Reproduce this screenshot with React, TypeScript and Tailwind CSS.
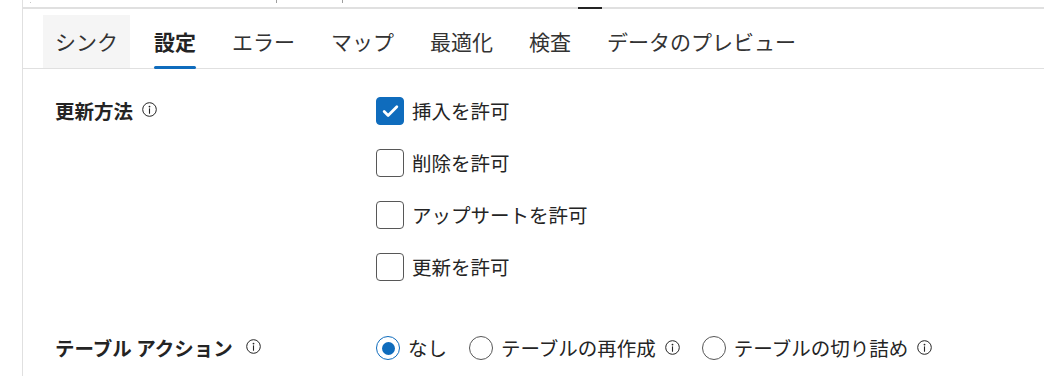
import { Check } from 'lucide-react';

const tabs = ['シンク', '設定', 'エラー', 'マップ', '最適化', '検査', 'データのプレビュー'];

const checks = [
  { label: '挿入を許可', checked: true },
  { label: '削除を許可', checked: false },
  { label: 'アップサートを許可', checked: false },
  { label: '更新を許可', checked: false },
];

const radios = [
  { label: 'なし', checked: true, info: false },
  { label: 'テーブルの再作成', checked: false, info: true },
  { label: 'テーブルの切り詰め', checked: false, info: true },
];

const InfoIcon = ({ className = '' }: { className?: string }) => (
  <svg width="15" height="15" viewBox="0 0 15 15" className={className}>
    <circle cx="7.5" cy="7.5" r="6.8" fill="none" stroke="#242424" strokeWidth="1" />
    <circle cx="7.5" cy="4.6" r="0.9" fill="#242424" />
    <path d="M7.5 6.8v4.4" stroke="#242424" strokeWidth="1.1" strokeLinecap="round" />
  </svg>
);

const App = () => {
  return (
    <div className="flex h-[376px] w-[1044px] overflow-hidden bg-white text-[#242424] font-['Noto_Sans_CJK_JP','Noto_Sans',sans-serif]">
      <div className="w-[22px] shrink-0" />
      <div className="flex flex-1 flex-col border-l border-[#e0e0e0]">
        {/* splitter remnants */}
        <div className="relative h-[7px]">
          <div className="absolute left-[7px] top-[2px] h-px w-px bg-[#c8c8c8]" />
          <div className="absolute left-[253px] top-0 h-[3px] w-px bg-[#9e9e9e]" />
          <div className="absolute left-[319px] top-0 h-[3px] w-px bg-[#9e9e9e]" />
        </div>
        <div className="flex h-[2px]">
          <div className="w-[555px] bg-[#e0e0e0]" />
          <div className="w-[24px] bg-[#242424]" />
          <div className="flex-1 bg-[#e0e0e0]" />
        </div>

        {/* tabs */}
        <div className="mt-[6px] flex gap-3 border-b border-[#e0e0e0] pl-[20px]">
          {tabs.map((t, i) => (
            <div
              key={t}
              className={`relative flex h-[53px] items-center px-3 text-[21px] leading-none ${
                i === 0 ? 'bg-[#f5f5f5]' : ''
              } ${i === 1 ? 'font-bold' : 'text-[#333333]'}`}
            >
              {t}
              {i === 1 && <div className="absolute bottom-[-1px] left-3 right-3 h-[3px] rounded-sm bg-[#0f6cbd]" />}
            </div>
          ))}
        </div>

        {/* settings */}
        <div className="pl-[32px] pt-[28px] text-[19.5px] leading-none">
          <div className="flex">
            <div className="flex h-[28px] w-[321px] items-center gap-[9px]">
              <span className="font-bold">更新方法</span>
              <InfoIcon className="-mt-[4px]" />
            </div>
            <div className="flex flex-col gap-[24px]">
              {checks.map((c) => (
                <div key={c.label} className="flex h-[28px] items-center gap-2">
                  <div
                    className={`flex h-[28px] w-[28px] items-center justify-center rounded-[4px] border ${
                      c.checked ? 'border-[#0f6cbd] bg-[#0f6cbd]' : 'border-[#575757] bg-white'
                    }`}
                  >
                    {c.checked && <Check className="h-[19px] w-[19px] text-white" strokeWidth={3.5} />}
                  </div>
                  <span>{c.label}</span>
                </div>
              ))}
            </div>
          </div>

          <div className="mt-[55px] flex h-[24px] items-center">
            <div className="flex w-[321px] items-center gap-[13px]">
              <span className="font-bold">テーブル アクション</span>
              <InfoIcon className="-mt-[4px]" />
            </div>
            <div className="flex items-center gap-[22px]">
              {radios.map((r) => (
                <div key={r.label} className="flex items-center gap-2">
                  <div
                    className={`flex h-[24px] w-[24px] items-center justify-center rounded-full border ${
                      r.checked ? 'border-[#0f6cbd]' : 'border-[#575757]'
                    }`}
                  >
                    {r.checked && <div className="h-[13px] w-[13px] rounded-full bg-[#0f6cbd]" />}
                  </div>
                  <span>{r.label}</span>
                  {r.info && <InfoIcon className="ml-[1px] -mt-[2px]" />}
                </div>
              ))}
            </div>
          </div>
        </div>
      </div>
    </div>
  );
};

export default App;
